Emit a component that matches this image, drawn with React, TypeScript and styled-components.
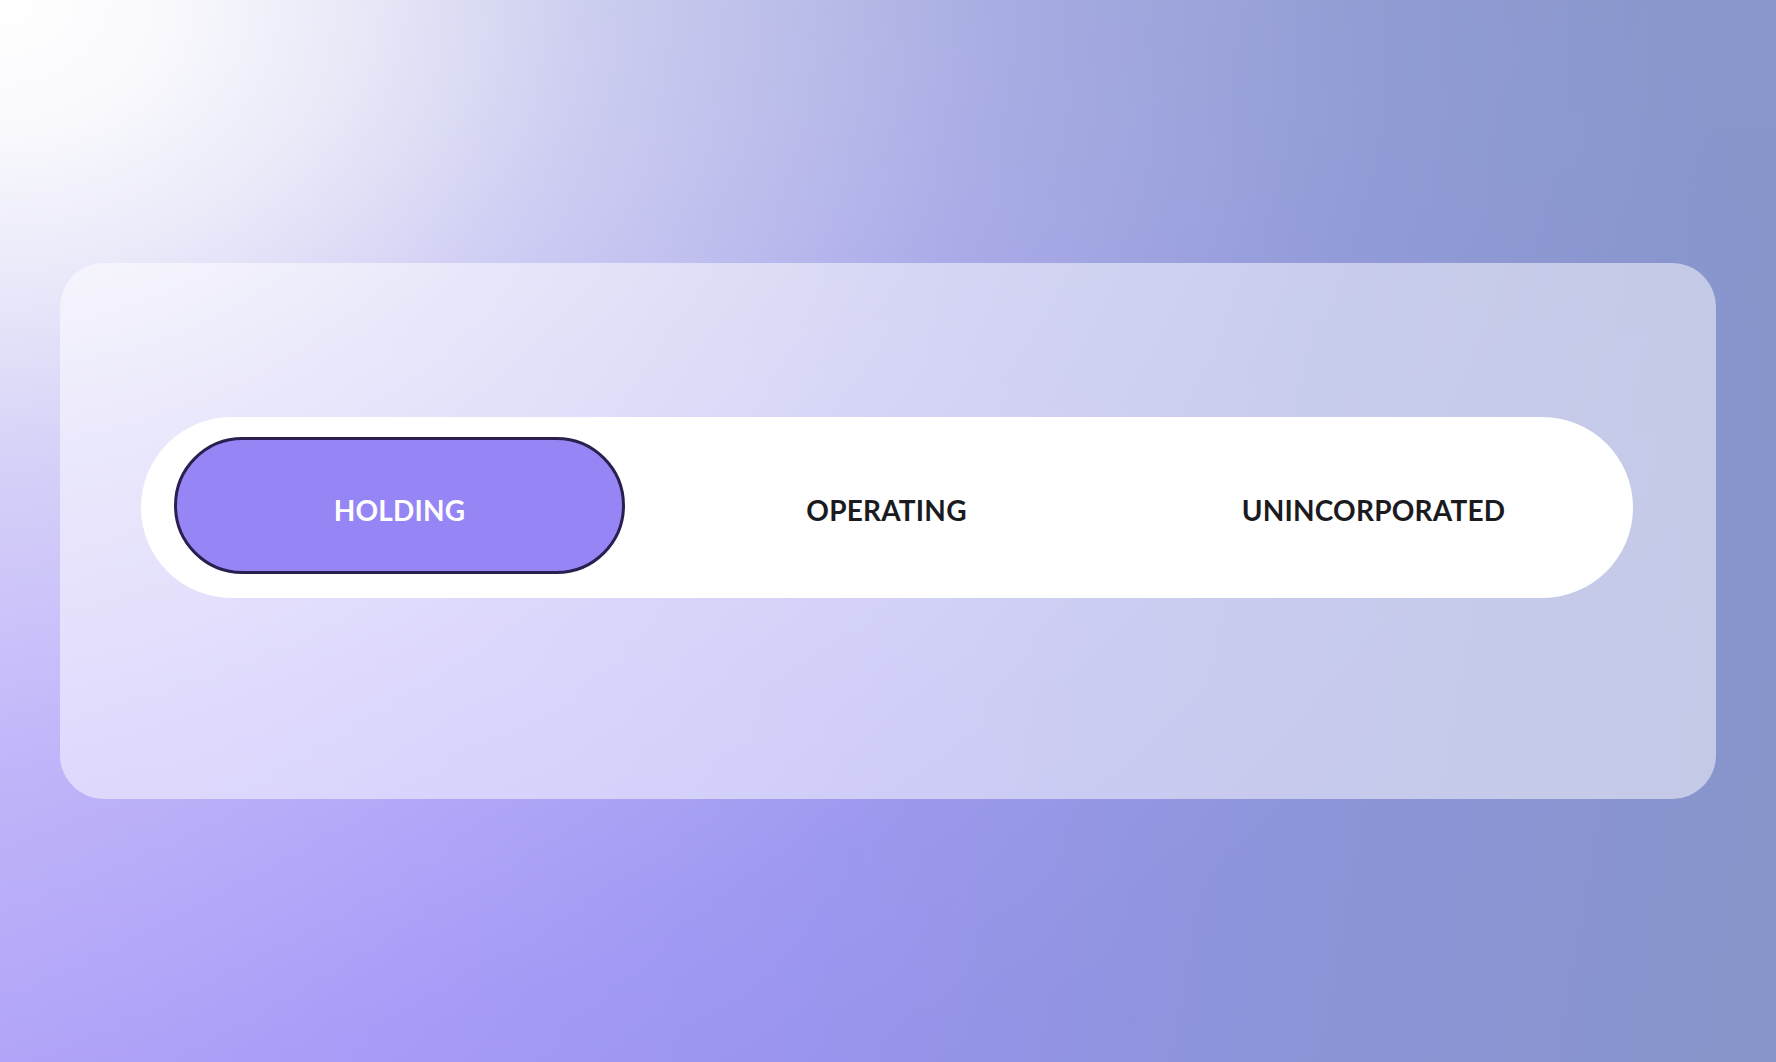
import React, { useState } from "react";
import styled, { createGlobalStyle } from "styled-components";

const GlobalStyle = createGlobalStyle`
  html, body {
    margin: 0;
    padding: 0;
  }
  body {
    font-family: "Lato", "Open Sans", sans-serif;
  }
`;

const Page = styled.div`
  box-sizing: border-box;
  width: 100%;
  height: 1062px;
  display: flex;
  align-items: center;
  padding: 0 60px;
  background:
    radial-gradient(
      ellipse 1700px 1300px at 0 0,
      rgba(255, 255, 255, 1) 0%,
      rgba(255, 255, 255, 0.95) 9%,
      rgba(255, 255, 255, 0.78) 21%,
      rgba(255, 255, 255, 0.52) 35%,
      rgba(255, 255, 255, 0.22) 59%,
      rgba(255, 255, 255, 0.05) 82%,
      rgba(255, 255, 255, 0) 100%
    ),
    linear-gradient(to bottom, rgba(136, 152, 200, 0.55) 0%, rgba(136, 152, 200, 0) 60%),
    linear-gradient(100deg, #b2a4f8 0%, #a296f7 30%, #9893ef 50%, #8e94dc 70%, #8795c9 100%);
`;

const Card = styled.div`
  box-sizing: border-box;
  width: 100%;
  height: 536px;
  padding: 154px 83px 201px 81px;
  border-radius: 44px;
  background: rgba(255, 255, 255, 0.5);
`;

const SegmentBar = styled.div`
  box-sizing: border-box;
  height: 181px;
  padding: 20px 16px 24px 15px;
  border-radius: 91px;
  background: #ffffff;
  display: grid;
  grid-template-columns: repeat(3, 1fr);
`;

const Segment = styled.div`
  padding: 0 18px;
  display: flex;
`;

const SegmentButton = styled.button<{ $active: boolean }>`
  box-sizing: border-box;
  flex: 1;
  height: 137px;
  border-radius: 70px;
  border: 3px solid ${(p) => (p.$active ? "#2a1f4e" : "transparent")};
  background: ${(p) => (p.$active ? "#9685f5" : "transparent")};
  color: ${(p) => (p.$active ? "#ffffff" : "#1b1b1f")};
  font-family: "Lato", "Open Sans", sans-serif;
  font-weight: 700;
  font-size: 28px;
  letter-spacing: 0.2px;
  text-transform: uppercase;
  padding: 8px 0 0;
  cursor: pointer;
  display: flex;
  align-items: center;
  justify-content: center;
`;

const options = ["Holding", "Operating", "Unincorporated"];

export default function App() {
  const [active, setActive] = useState(0);
  return (
    <>
      <GlobalStyle />
      <Page>
        <Card>
          <SegmentBar>
            {options.map((o, i) => (
              <Segment key={o}>
                <SegmentButton $active={i === active} onClick={() => setActive(i)}>
                  {o}
                </SegmentButton>
              </Segment>
            ))}
          </SegmentBar>
        </Card>
      </Page>
    </>
  );
}
